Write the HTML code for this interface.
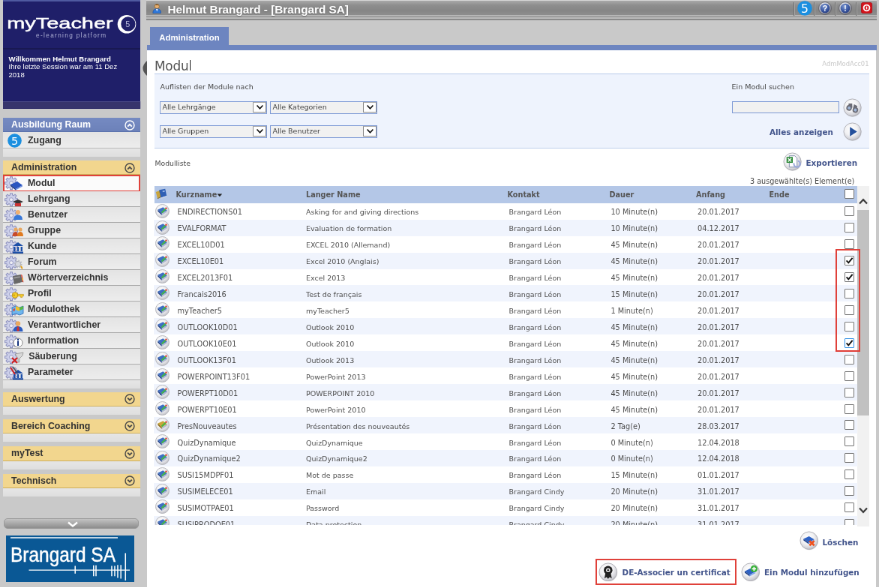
<!DOCTYPE html>
<html lang="de"><head><meta charset="utf-8"><title>myTeacher - Modul</title>
<style>
*{box-sizing:border-box;margin:0;padding:0}
html,body{width:879px;height:587px;overflow:hidden;background:#c9c9c9}
body{font-family:"DejaVu Sans","Liberation Sans",sans-serif}
#w{position:absolute;left:0;top:0;width:1172px;height:783px;transform:scale(.75);transform-origin:0 0;will-change:transform;overflow:hidden;color:#4a4a4a;font-size:9.5px}
.abs{position:absolute}
.ar{font-family:"Liberation Sans",sans-serif}
/* sidebar */
#sb{position:absolute;left:4px;top:0;width:183px;height:783px}
#navy{position:absolute;left:0;top:0;width:183px;height:145px;background:#1f1f69;border-top:2px solid #4f5aa0}
#navy .ln{position:absolute;left:0;top:62px;width:183px;height:2px;background:#191952}
#navy .strip{position:absolute;left:0;bottom:0;width:183px;height:10.5px;background:#37356c;border-top:1px solid #4c4c86}
.welc{position:absolute;left:7.5px;top:71.5px;color:#fff;font:9.55px/10.7px "Liberation Sans",sans-serif;width:160px}
.welc b{font-weight:bold}
.gh{position:absolute;left:0;width:183px;height:19.4px;font:bold 12.4px/18.6px "Liberation Sans",sans-serif;padding-left:11px}
.gh.blue{background:linear-gradient(#768bc2,#6d82ba);color:#fff;border-bottom:1.5px solid #5b72ad}
.gh.yel{background:#f2d68e;color:#333;border-bottom:1.5px solid #cfae5c}
.gh .chev{position:absolute;right:7px;top:2.5px}
.sp{position:absolute;left:0;width:183px;height:11.2px;background:linear-gradient(#e6e6e6,#dfdfdf)}
.it{position:absolute;left:0;width:183px;height:21px;background:linear-gradient(#e4e4e4,#ededed);border-bottom:1.5px solid #a9a9a9;font:bold 12.4px/21.5px "Liberation Sans",sans-serif;color:#333}
.it .mi{position:absolute;left:0.5px;top:0.5px}
.it span{position:absolute;left:33px;top:0}
.it.sel{background:#fbfbfb;border:2.4px solid #e0413a;height:23px;top:233px;line-height:18.5px}
.it.sel span{left:31px}
.it.sel .mi{left:-1.5px;top:-1.5px}
/* main */
#tb{position:absolute;left:195px;top:0;width:974.3px;height:27.2px;background:linear-gradient(to bottom,#d4d4d4 0,#d4d4d4 1.2px,#a8a8a8 1.3px,#8e8e8e 7px,#868686 14px,#8e8e8e 20px,#b6b6b6 20px,#b6b6b6 21.7px,#868686 21.7px,#868686 22.9px,#bcbcbc 22.9px,#bcbcbc 25.3px,#8a8a8a 25.3px,#8a8a8a 27.2px)}
#tb2{display:none}
#tb .t{position:absolute;left:28.5px;top:2.9px;font:bold 15.3px/20px "Liberation Sans",sans-serif;color:#fff;text-shadow:0 1px 1px #666;white-space:nowrap}
#tab{position:absolute;left:200px;top:36px;width:105px;height:26px;background:#6d85c0;color:#fff;font:bold 11.4px/29.8px "Liberation Sans",sans-serif;text-align:center}
#bl{position:absolute;left:196px;top:60.4px;width:973.3px;height:6.4px;background:#6d85c0}
#ct{position:absolute;left:196px;top:66.6px;width:972px;height:717px;background:#fff}
h1{position:absolute;left:206px;top:75.7px;font:normal 16.9px/24px "DejaVu Sans",sans-serif;color:#555;letter-spacing:-.2px}
#code{position:absolute;right:13.5px;top:79.5px;font-size:8.4px;color:#c9c9c9}
#flt{position:absolute;left:206px;top:97.8px;width:953px;height:100.7px;background:#eef3fd;border-top:1.5px solid #bccdec;border-bottom:1.5px solid #bccdec}
.lbl{position:absolute;white-space:nowrap;line-height:12px}
.sel2{position:absolute;width:143px;height:16.5px;border:1.5px solid #7f9bd6;background:#f1f1f1;font-size:9.5px;line-height:14.2px;padding-left:2.4px;color:#444}
.sel2 i{position:absolute;right:0;top:0;width:18.5px;height:13.5px;background:#fff;border:1px solid #8a8a8a;border-top-color:#aaa}
.sel2 i svg{position:absolute;left:3px;top:2.2px}
#inp{position:absolute;left:976px;top:134.8px;width:143px;height:16.7px;border:1.5px solid #7f9bd6;background:#f1f1f1}
.bb{font-weight:bold;color:#43558c}
/* table */
#th{position:absolute;left:206px;top:248px;width:937px;height:22.8px;background:#b4c7e7;font-weight:bold;color:#555;font-size:9.7px}
#th span{position:absolute;top:5.8px;line-height:12px;white-space:nowrap}
#tv{position:absolute;left:206px;top:270.8px;width:937px;height:429px;overflow:hidden}
.r{position:relative;height:21.95px;width:937px;font-size:9.75px}
.r.e{background:#f0f4fd}
.r span.c{position:absolute;top:6.6px;line-height:12px;white-space:nowrap;color:#505050}
.r>svg{position:absolute;left:1px;top:0.8px}
.cb{position:absolute;left:920px;top:4.5px;width:13px;height:13px;border:1px solid #767676;background:#fff;border-radius:1px}
.cb svg{position:absolute;left:0;top:0}
.cb.foc{border-color:#2f8fe6}
#sc{position:absolute;left:1143px;top:248px;width:16px;height:454px;background:#f1f1f1}
#sc .th{position:absolute;left:0;top:32px;width:16px;height:274px;background:#c1c1c1}
.red{position:absolute;border:2.6px solid #e0413a}
</style></head><body><div id="w">
<svg width="0" height="0" style="position:absolute"><defs><radialGradient id="rg" cx="42%" cy="36%" r="66%"><stop offset="0" stop-color="#ffffff"/><stop offset=".55" stop-color="#f1f1f3"/><stop offset=".85" stop-color="#d2d2d8"/><stop offset="1" stop-color="#b9b9c0"/></radialGradient><radialGradient id="rq" cx="40%" cy="30%" r="75%"><stop offset="0" stop-color="#f4f4f6"/><stop offset=".6" stop-color="#b8bac4"/><stop offset="1" stop-color="#6a6c78"/></radialGradient><radialGradient id="rb" cx="40%" cy="30%" r="80%"><stop offset="0" stop-color="#7f9ad2"/><stop offset=".55" stop-color="#3f5ca6"/><stop offset="1" stop-color="#22387a"/></radialGradient></defs></svg>

<div id="sb"><div id="navy">
<svg class="abs" style="left:0;top:14px" width="183" height="40" viewBox="0 0 183 40"><text x="5.2" y="21.6" font-family="'Liberation Sans',sans-serif" font-size="19.4" fill="#fff" stroke="#fff" stroke-width=".45" textLength="141.5" lengthAdjust="spacingAndGlyphs">myTeacher</text><circle cx="165" cy="16.2" r="12.3" fill="#fff"/><circle cx="166.9" cy="15.9" r="9.6" fill="#1f1f69"/><text x="166.2" y="20" font-family="'Liberation Sans',sans-serif" font-size="10.8" fill="#b9bbdc" text-anchor="middle">5</text><text x="44" y="34.3" font-family="'Liberation Sans',sans-serif" font-size="8.2" fill="#b0b2d6" textLength="93" lengthAdjust="spacing">e-learning platform</text></svg>
<div class="ln"></div>
<div class="welc"><b>Willkommen Helmut Brangard</b><br>Ihre letzte Session war am 11 Dez 2018</div>
<div class="strip"></div></div>
<div class="gh blue" style="top:157px">Ausbildung Raum<svg class="chev" width="14" height="14" viewBox="0 0 14 14"><circle cx="7" cy="7" r="6" fill="none" stroke="#fff" stroke-width="1.4"/><path d="M4.2 8.6 L7 5.8 L9.8 8.6" fill="none" stroke="#fff" stroke-width="1.9"/></svg></div>
<div class="it" style="top:176px;height:22px"><span class="abs" style="left:6px;top:2.2px;line-height:0"><svg width="19" height="19" viewBox="0 0 19 19"><circle cx="9.5" cy="9.5" r="9.3" fill="#1b8fe0"/><text x="9.5" y="14.6" font-family="'DejaVu Sans',sans-serif" font-size="14.5" font-weight="normal" fill="#fff" text-anchor="middle">5</text></svg></span><span style="top:1px">Zugang</span></div>
<div class="sp" style="top:198px"></div>
<div class="gh yel" style="top:214px">Administration<svg class="chev" width="14" height="14" viewBox="0 0 14 14"><circle cx="7" cy="7" r="6" fill="none" stroke="#4a4a4a" stroke-width="1.4"/><path d="M4.2 8.6 L7 5.8 L9.8 8.6" fill="none" stroke="#4a4a4a" stroke-width="1.9"/></svg></div>
<div class="it sel"><svg class="mi" width="27" height="21" viewBox="0 0 27 21"><path d="M18.47 8.72 L18.47 11.68 L16.10 11.77 L15.42 13.41 L17.04 15.15 L14.95 17.24 L13.21 15.62 L11.57 16.30 L11.48 18.67 L8.52 18.67 L8.43 16.30 L6.79 15.62 L5.05 17.24 L2.96 15.15 L4.58 13.41 L3.90 11.77 L1.53 11.68 L1.53 8.72 L3.90 8.63 L4.58 6.99 L2.96 5.25 L5.05 3.16 L6.79 4.78 L8.43 4.10 L8.52 1.73 L11.48 1.73 L11.57 4.10 L13.21 4.78 L14.95 3.16 L17.04 5.25 L15.42 6.99 L16.10 8.63Z" fill="#cdd0ea" stroke="#9296c2" stroke-width="1.1" stroke-linejoin="round"/><circle cx="10" cy="10.2" r="2.5" fill="#eeeef4" stroke="#9296c2" stroke-width=".9"/><path d="M9 12 L18 8 L25 13 L16 18 Z" fill="#2a55c0"/><path d="M9 12 L16 18 L16 19.5 L9 14Z" fill="#16357f"/><path d="M16 18 L25 13 L25 14.5 L16 19.5Z" fill="#6d8fe0"/></svg><span>Modul</span></div>
<div class="it" style="top:255px"><svg class="mi" width="27" height="21" viewBox="0 0 27 21"><path d="M18.47 8.72 L18.47 11.68 L16.10 11.77 L15.42 13.41 L17.04 15.15 L14.95 17.24 L13.21 15.62 L11.57 16.30 L11.48 18.67 L8.52 18.67 L8.43 16.30 L6.79 15.62 L5.05 17.24 L2.96 15.15 L4.58 13.41 L3.90 11.77 L1.53 11.68 L1.53 8.72 L3.90 8.63 L4.58 6.99 L2.96 5.25 L5.05 3.16 L6.79 4.78 L8.43 4.10 L8.52 1.73 L11.48 1.73 L11.57 4.10 L13.21 4.78 L14.95 3.16 L17.04 5.25 L15.42 6.99 L16.10 8.63Z" fill="#cdd0ea" stroke="#9296c2" stroke-width="1.1" stroke-linejoin="round"/><circle cx="10" cy="10.2" r="2.5" fill="#eeeef4" stroke="#9296c2" stroke-width=".9"/><path d="M12 13 L19 10 L26 13 L19 16Z" fill="#333"/><path d="M15 15 L23 15 L23 19 L15 19Z" fill="#c33"/></svg><span>Lehrgang</span></div>
<div class="it" style="top:276px"><svg class="mi" width="27" height="21" viewBox="0 0 27 21"><path d="M18.47 8.72 L18.47 11.68 L16.10 11.77 L15.42 13.41 L17.04 15.15 L14.95 17.24 L13.21 15.62 L11.57 16.30 L11.48 18.67 L8.52 18.67 L8.43 16.30 L6.79 15.62 L5.05 17.24 L2.96 15.15 L4.58 13.41 L3.90 11.77 L1.53 11.68 L1.53 8.72 L3.90 8.63 L4.58 6.99 L2.96 5.25 L5.05 3.16 L6.79 4.78 L8.43 4.10 L8.52 1.73 L11.48 1.73 L11.57 4.10 L13.21 4.78 L14.95 3.16 L17.04 5.25 L15.42 6.99 L16.10 8.63Z" fill="#cdd0ea" stroke="#9296c2" stroke-width="1.1" stroke-linejoin="round"/><circle cx="10" cy="10.2" r="2.5" fill="#eeeef4" stroke="#9296c2" stroke-width=".9"/><circle cx="19" cy="6" r="3" fill="#f0b070"/><path d="M13 16 Q13 9.5 19 9.5 Q25 9.5 25 16Z" fill="#3878d8"/></svg><span>Benutzer</span></div>
<div class="it" style="top:297px"><svg class="mi" width="27" height="21" viewBox="0 0 27 21"><path d="M18.47 8.72 L18.47 11.68 L16.10 11.77 L15.42 13.41 L17.04 15.15 L14.95 17.24 L13.21 15.62 L11.57 16.30 L11.48 18.67 L8.52 18.67 L8.43 16.30 L6.79 15.62 L5.05 17.24 L2.96 15.15 L4.58 13.41 L3.90 11.77 L1.53 11.68 L1.53 8.72 L3.90 8.63 L4.58 6.99 L2.96 5.25 L5.05 3.16 L6.79 4.78 L8.43 4.10 L8.52 1.73 L11.48 1.73 L11.57 4.10 L13.21 4.78 L14.95 3.16 L17.04 5.25 L15.42 6.99 L16.10 8.63Z" fill="#cdd0ea" stroke="#9296c2" stroke-width="1.1" stroke-linejoin="round"/><circle cx="10" cy="10.2" r="2.5" fill="#eeeef4" stroke="#9296c2" stroke-width=".9"/><circle cx="16" cy="8" r="2.6" fill="#e9a860"/><circle cx="22" cy="8" r="2.6" fill="#e9a860"/><path d="M11.5 17 Q11.5 11 16 11 Q19 11 19 17Z" fill="#c84a2a"/><path d="M18 17 Q18 11 22 11 Q26 11 26 17Z" fill="#e07a20"/></svg><span>Gruppe</span></div>
<div class="it" style="top:318px"><svg class="mi" width="27" height="21" viewBox="0 0 27 21"><path d="M18.47 8.72 L18.47 11.68 L16.10 11.77 L15.42 13.41 L17.04 15.15 L14.95 17.24 L13.21 15.62 L11.57 16.30 L11.48 18.67 L8.52 18.67 L8.43 16.30 L6.79 15.62 L5.05 17.24 L2.96 15.15 L4.58 13.41 L3.90 11.77 L1.53 11.68 L1.53 8.72 L3.90 8.63 L4.58 6.99 L2.96 5.25 L5.05 3.16 L6.79 4.78 L8.43 4.10 L8.52 1.73 L11.48 1.73 L11.57 4.10 L13.21 4.78 L14.95 3.16 L17.04 5.25 L15.42 6.99 L16.10 8.63Z" fill="#cdd0ea" stroke="#9296c2" stroke-width="1.1" stroke-linejoin="round"/><circle cx="10" cy="10.2" r="2.5" fill="#eeeef4" stroke="#9296c2" stroke-width=".9"/><path d="M12 9 L19 4 L26 9Z" fill="#1d4fa8"/><path d="M13 10h2.4v6H13zM17.8 10h2.4v6h-2.4zM22.6 10H25v6h-2.4z" fill="#1d4fa8"/><path d="M12 16.5h14V19H12z" fill="#1d4fa8"/></svg><span>Kunde</span></div>
<div class="it" style="top:339px"><svg class="mi" width="27" height="21" viewBox="0 0 27 21"><path d="M18.47 8.72 L18.47 11.68 L16.10 11.77 L15.42 13.41 L17.04 15.15 L14.95 17.24 L13.21 15.62 L11.57 16.30 L11.48 18.67 L8.52 18.67 L8.43 16.30 L6.79 15.62 L5.05 17.24 L2.96 15.15 L4.58 13.41 L3.90 11.77 L1.53 11.68 L1.53 8.72 L3.90 8.63 L4.58 6.99 L2.96 5.25 L5.05 3.16 L6.79 4.78 L8.43 4.10 L8.52 1.73 L11.48 1.73 L11.57 4.10 L13.21 4.78 L14.95 3.16 L17.04 5.25 L15.42 6.99 L16.10 8.63Z" fill="#cdd0ea" stroke="#9296c2" stroke-width="1.1" stroke-linejoin="round"/><circle cx="10" cy="10.2" r="2.5" fill="#eeeef4" stroke="#9296c2" stroke-width=".9"/><g fill="none" stroke="#b9bcc4" stroke-width="2.4" stroke-dasharray="1.8 1.6"><circle cx="19" cy="12" r="4.4"/></g><circle cx="19" cy="12" r="3.6" fill="#d6d8de" stroke="#a9acb6" stroke-width=".8"/><path d="M22 14 Q26 15 25 19 Q23 19 22 14" fill="#e0a020"/></svg><span>Forum</span></div>
<div class="it" style="top:360px"><svg class="mi" width="27" height="21" viewBox="0 0 27 21"><path d="M18.47 8.72 L18.47 11.68 L16.10 11.77 L15.42 13.41 L17.04 15.15 L14.95 17.24 L13.21 15.62 L11.57 16.30 L11.48 18.67 L8.52 18.67 L8.43 16.30 L6.79 15.62 L5.05 17.24 L2.96 15.15 L4.58 13.41 L3.90 11.77 L1.53 11.68 L1.53 8.72 L3.90 8.63 L4.58 6.99 L2.96 5.25 L5.05 3.16 L6.79 4.78 L8.43 4.10 L8.52 1.73 L11.48 1.73 L11.57 4.10 L13.21 4.78 L14.95 3.16 L17.04 5.25 L15.42 6.99 L16.10 8.63Z" fill="#cdd0ea" stroke="#9296c2" stroke-width="1.1" stroke-linejoin="round"/><circle cx="10" cy="10.2" r="2.5" fill="#eeeef4" stroke="#9296c2" stroke-width=".9"/><path d="M12 7 L23 5 L25 15 L14 18Z" fill="#686868"/><path d="M13.6 8.6 L21.6 7.2 L22 9 L14 10.4Z" fill="#9a9a9a"/><path d="M23 5 L24.6 5.8 L26.4 15.4 L25 15Z" fill="#e04030"/><path d="M24.2 9.4 L25.6 9.8 L26.2 12.6 L24.8 12.4Z" fill="#f0c030"/><path d="M14 18 L25 15 L26.4 15.4 L15 19Z" fill="#d8d8d8"/></svg><span>Wörterverzeichnis</span></div>
<div class="it" style="top:381px"><svg class="mi" width="27" height="21" viewBox="0 0 27 21"><path d="M18.47 8.72 L18.47 11.68 L16.10 11.77 L15.42 13.41 L17.04 15.15 L14.95 17.24 L13.21 15.62 L11.57 16.30 L11.48 18.67 L8.52 18.67 L8.43 16.30 L6.79 15.62 L5.05 17.24 L2.96 15.15 L4.58 13.41 L3.90 11.77 L1.53 11.68 L1.53 8.72 L3.90 8.63 L4.58 6.99 L2.96 5.25 L5.05 3.16 L6.79 4.78 L8.43 4.10 L8.52 1.73 L11.48 1.73 L11.57 4.10 L13.21 4.78 L14.95 3.16 L17.04 5.25 L15.42 6.99 L16.10 8.63Z" fill="#cdd0ea" stroke="#9296c2" stroke-width="1.1" stroke-linejoin="round"/><circle cx="10" cy="10.2" r="2.5" fill="#eeeef4" stroke="#9296c2" stroke-width=".9"/><circle cx="15" cy="11.6" r="3.8" fill="#f4cc28" stroke="#b98a10" stroke-width=".8"/><circle cx="13.8" cy="11.6" r="1" fill="#b98a10"/><path d="M18.4 10.4 H26.4 V12.8 H24.6 V14.6 H22.6 V12.8 H18.4Z" fill="#f4cc28" stroke="#b98a10" stroke-width=".6"/></svg><span>Profil</span></div>
<div class="it" style="top:402px"><svg class="mi" width="27" height="21" viewBox="0 0 27 21"><path d="M18.47 8.72 L18.47 11.68 L16.10 11.77 L15.42 13.41 L17.04 15.15 L14.95 17.24 L13.21 15.62 L11.57 16.30 L11.48 18.67 L8.52 18.67 L8.43 16.30 L6.79 15.62 L5.05 17.24 L2.96 15.15 L4.58 13.41 L3.90 11.77 L1.53 11.68 L1.53 8.72 L3.90 8.63 L4.58 6.99 L2.96 5.25 L5.05 3.16 L6.79 4.78 L8.43 4.10 L8.52 1.73 L11.48 1.73 L11.57 4.10 L13.21 4.78 L14.95 3.16 L17.04 5.25 L15.42 6.99 L16.10 8.63Z" fill="#cdd0ea" stroke="#9296c2" stroke-width="1.1" stroke-linejoin="round"/><circle cx="10" cy="10.2" r="2.5" fill="#eeeef4" stroke="#9296c2" stroke-width=".9"/><path d="M11 7 L16 5 L21 7 L26 5 L26 15 L21 17 L16 15 L11 17Z" fill="#6fb6ee" stroke="#2a6ab8" stroke-width=".8"/><path d="M16 5 L21 7 L21 12 L16 10Z" fill="#f0c030"/><path d="M21 7 L26 5 L26 9 L21 11Z" fill="#58b848"/><path d="M12.6 9 l2.2 -1 v3.2 l-2.2 1z" fill="#d84030"/></svg><span>Modulothek</span></div>
<div class="it" style="top:423px"><svg class="mi" width="27" height="21" viewBox="0 0 27 21"><path d="M18.47 8.72 L18.47 11.68 L16.10 11.77 L15.42 13.41 L17.04 15.15 L14.95 17.24 L13.21 15.62 L11.57 16.30 L11.48 18.67 L8.52 18.67 L8.43 16.30 L6.79 15.62 L5.05 17.24 L2.96 15.15 L4.58 13.41 L3.90 11.77 L1.53 11.68 L1.53 8.72 L3.90 8.63 L4.58 6.99 L2.96 5.25 L5.05 3.16 L6.79 4.78 L8.43 4.10 L8.52 1.73 L11.48 1.73 L11.57 4.10 L13.21 4.78 L14.95 3.16 L17.04 5.25 L15.42 6.99 L16.10 8.63Z" fill="#cdd0ea" stroke="#9296c2" stroke-width="1.1" stroke-linejoin="round"/><circle cx="10" cy="10.2" r="2.5" fill="#eeeef4" stroke="#9296c2" stroke-width=".9"/><circle cx="19" cy="7.5" r="3.2" fill="#e9a860"/><path d="M12.5 18 Q12.5 11 19 11 Q25.5 11 25.5 18Z" fill="#2a5bc0"/><path d="M18 11.5h2l.8 5-1.8 1.5-1.8-1.5z" fill="#c33"/></svg><span>Verantwortlicher</span></div>
<div class="it" style="top:444px"><svg class="mi" width="27" height="21" viewBox="0 0 27 21"><path d="M18.47 8.72 L18.47 11.68 L16.10 11.77 L15.42 13.41 L17.04 15.15 L14.95 17.24 L13.21 15.62 L11.57 16.30 L11.48 18.67 L8.52 18.67 L8.43 16.30 L6.79 15.62 L5.05 17.24 L2.96 15.15 L4.58 13.41 L3.90 11.77 L1.53 11.68 L1.53 8.72 L3.90 8.63 L4.58 6.99 L2.96 5.25 L5.05 3.16 L6.79 4.78 L8.43 4.10 L8.52 1.73 L11.48 1.73 L11.57 4.10 L13.21 4.78 L14.95 3.16 L17.04 5.25 L15.42 6.99 L16.10 8.63Z" fill="#cdd0ea" stroke="#9296c2" stroke-width="1.1" stroke-linejoin="round"/><circle cx="10" cy="10.2" r="2.5" fill="#eeeef4" stroke="#9296c2" stroke-width=".9"/><circle cx="19" cy="12" r="6" fill="#fff" stroke="#888" stroke-width="1"/><path d="M18 9.5h2v6.5h-2z" fill="#16357f"/><circle cx="19" cy="7.6" r="1.2" fill="#16357f"/></svg><span>Information</span></div>
<div class="it" style="top:465px"><svg class="mi" width="27" height="21" viewBox="0 0 27 21"><path d="M18.47 8.72 L18.47 11.68 L16.10 11.77 L15.42 13.41 L17.04 15.15 L14.95 17.24 L13.21 15.62 L11.57 16.30 L11.48 18.67 L8.52 18.67 L8.43 16.30 L6.79 15.62 L5.05 17.24 L2.96 15.15 L4.58 13.41 L3.90 11.77 L1.53 11.68 L1.53 8.72 L3.90 8.63 L4.58 6.99 L2.96 5.25 L5.05 3.16 L6.79 4.78 L8.43 4.10 L8.52 1.73 L11.48 1.73 L11.57 4.10 L13.21 4.78 L14.95 3.16 L17.04 5.25 L15.42 6.99 L16.10 8.63Z" fill="#cdd0ea" stroke="#9296c2" stroke-width="1.1" stroke-linejoin="round"/><circle cx="10" cy="10.2" r="2.5" fill="#eeeef4" stroke="#9296c2" stroke-width=".9"/><path d="M15 6 L26 4 L25 8 L21 12 L21 17 L19 17 L19 12Z" fill="#d8d8d8" stroke="#888" stroke-width=".7"/><path d="M11 11 L18 18 M18 11 L11 18" stroke="#d02020" stroke-width="2.2"/></svg><span style="left:34.2px">Säuberung</span></div>
<div class="it" style="top:486px"><svg class="mi" width="27" height="21" viewBox="0 0 27 21"><path d="M18.47 8.72 L18.47 11.68 L16.10 11.77 L15.42 13.41 L17.04 15.15 L14.95 17.24 L13.21 15.62 L11.57 16.30 L11.48 18.67 L8.52 18.67 L8.43 16.30 L6.79 15.62 L5.05 17.24 L2.96 15.15 L4.58 13.41 L3.90 11.77 L1.53 11.68 L1.53 8.72 L3.90 8.63 L4.58 6.99 L2.96 5.25 L5.05 3.16 L6.79 4.78 L8.43 4.10 L8.52 1.73 L11.48 1.73 L11.57 4.10 L13.21 4.78 L14.95 3.16 L17.04 5.25 L15.42 6.99 L16.10 8.63Z" fill="#cdd0ea" stroke="#9296c2" stroke-width="1.1" stroke-linejoin="round"/><circle cx="10" cy="10.2" r="2.5" fill="#eeeef4" stroke="#9296c2" stroke-width=".9"/><path d="M12 11 L19 6 L26 11Z" fill="#1d4fa8"/><path d="M13 12h2.4v5H13zM17.8 12h2.4v5h-2.4zM22.6 12H25v5h-2.4z" fill="#1d4fa8"/><path d="M12 17.2h14V19.4H12z" fill="#1d4fa8"/><path d="M9 3 L15 12" stroke="#d02020" stroke-width="2"/><path d="M12 2 L18 10" stroke="#555" stroke-width="1.6"/></svg><span>Parameter</span></div>
<div class="sp" style="top:507px"></div>
<div class="gh yel" style="top:522.6px;line-height:19.8px">Auswertung<svg class="chev" width="14" height="14" viewBox="0 0 14 14"><circle cx="7" cy="7" r="6" fill="none" stroke="#4a4a4a" stroke-width="1.4"/><path d="M4.2 5.6 L7 8.4 L9.8 5.6" fill="none" stroke="#4a4a4a" stroke-width="1.9"/></svg></div>
<div class="sp" style="top:542.0px"></div>
<div class="gh yel" style="top:558.9px;line-height:19.8px">Bereich Coaching<svg class="chev" width="14" height="14" viewBox="0 0 14 14"><circle cx="7" cy="7" r="6" fill="none" stroke="#4a4a4a" stroke-width="1.4"/><path d="M4.2 5.6 L7 8.4 L9.8 5.6" fill="none" stroke="#4a4a4a" stroke-width="1.9"/></svg></div>
<div class="sp" style="top:578.3px"></div>
<div class="gh yel" style="top:595.2px;line-height:19.8px">myTest<svg class="chev" width="14" height="14" viewBox="0 0 14 14"><circle cx="7" cy="7" r="6" fill="none" stroke="#4a4a4a" stroke-width="1.4"/><path d="M4.2 5.6 L7 8.4 L9.8 5.6" fill="none" stroke="#4a4a4a" stroke-width="1.9"/></svg></div>
<div class="sp" style="top:614.6px"></div>
<div class="gh yel" style="top:631.5px;line-height:19.8px">Technisch<svg class="chev" width="14" height="14" viewBox="0 0 14 14"><circle cx="7" cy="7" r="6" fill="none" stroke="#4a4a4a" stroke-width="1.4"/><path d="M4.2 5.6 L7 8.4 L9.8 5.6" fill="none" stroke="#4a4a4a" stroke-width="1.9"/></svg></div>
<div class="sp" style="top:650.9px"></div>
<div class="abs" style="left:0.6px;top:690.6px;width:180.6px;height:14.8px;border-radius:5px;background:linear-gradient(#c4c4c4,#8e8e8e);border:1px solid #9a9a9a"><svg class="abs" style="left:83px;top:3px" width="16" height="9" viewBox="0 0 16 9"><path d="M2 1.5 L8 6.5 L14 1.5" fill="none" stroke="#fff" stroke-width="2.4"/></svg></div>
<svg class="abs" style="left:4px;top:713.8px" width="171.2" height="62.2" viewBox="0 0 171.2 62.2"><rect width="171.2" height="62.2" fill="#0a5895"/><path d="M6 3 H149" stroke="#fff" stroke-width="1.4"/><text x="6" y="34.9" font-family="'Liberation Sans',sans-serif" font-size="28.2" fill="#fff" stroke="#fff" stroke-width=".5" textLength="140" lengthAdjust="spacingAndGlyphs">Brangard SA</text><path d="M30.5 46.2 H165" stroke="#fff" stroke-width="1.3"/><path d="M92.2 40.5V50.8 M116.8 39.7V54.2 M120 39.7V54.2 M141 40.5V54.2 M145 40.5V54.2 M149 39.3V56.4 M153.2 39.3V57.5 M159.3 23.4V60" stroke="#fff" stroke-width="1.5"/></svg>
</div>
<svg class="abs" style="left:190px;top:80.5px" width="6" height="20" viewBox="0 0 6 20"><path d="M6 0 Q-5 10 6 20Z" fill="#555"/></svg>
<div id="tb"><svg class="abs" style="left:7.5px;top:3.5px" width="12.5" height="14.5" viewBox="0 0 16 18"><circle cx="8" cy="5.4" r="3.9" fill="#e8b070" stroke="#8a5a20" stroke-width=".8"/><path d="M5 3.6 Q8 0 11.6 3.8 Q8.4 2.6 5 3.6Z" fill="#6a4010"/><path d="M1 17 Q1 9.6 8 9.6 Q15 9.6 15 17Z" fill="#2f78d8" stroke="#1b4a96" stroke-width=".8"/><path d="M6.4 10 L8 14 L9.6 10Z" fill="#fff"/></svg><div class="t">Helmut Brangard - [Brangard SA]</div>
<div class="abs" style="left:863.0px;top:3px;width:1.5px;height:18px;background:#a9a9a9;border-left:.8px solid #6e6e6e"></div><div class="abs" style="left:890.0px;top:3px;width:1.5px;height:18px;background:#a9a9a9;border-left:.8px solid #6e6e6e"></div><div class="abs" style="left:918.0px;top:3px;width:1.5px;height:18px;background:#a9a9a9;border-left:.8px solid #6e6e6e"></div><div class="abs" style="left:946.4px;top:3px;width:1.5px;height:18px;background:#a9a9a9;border-left:.8px solid #6e6e6e"></div>
<svg class="abs" style="left:868.2px;top:1.4px" width="20" height="20" viewBox="0 0 19 19"><circle cx="9.5" cy="9.5" r="9.3" fill="#1b8fe0"/><text x="9.5" y="14.8" font-family="'DejaVu Sans',sans-serif" font-size="14.8" fill="#fff" text-anchor="middle">5</text></svg>
<svg class="abs" style="left:895.5px;top:1.6px" width="18" height="18" viewBox="0 0 18 18"><circle cx="9" cy="9" r="8.4" fill="url(#rq)" stroke="#5c5c64" stroke-width=".9"/><circle cx="9" cy="9" r="6.3" fill="url(#rb)"/><text x="9" y="12.9" font-family="'Liberation Sans',sans-serif" font-weight="bold" font-size="10.6" fill="#fff" text-anchor="middle">?</text></svg>
<svg class="abs" style="left:923.0px;top:1.6px" width="18" height="18" viewBox="0 0 18 18"><circle cx="9" cy="9" r="8.4" fill="url(#rq)" stroke="#5c5c64" stroke-width=".9"/><circle cx="9" cy="9" r="6.3" fill="url(#rb)"/><text x="9" y="12.9" font-family="'Liberation Sans',sans-serif" font-weight="bold" font-size="10.6" fill="#fff" text-anchor="middle">!</text></svg>
<svg class="abs" style="left:952.8px;top:3px" width="15" height="15" viewBox="0 0 17 17"><rect x=".5" y=".5" width="16" height="16" rx="2.6" fill="#d4141c" stroke="#a81018" stroke-width="1"/><circle cx="8.5" cy="8.5" r="4.4" fill="none" stroke="#fff" stroke-width="2.1"/><path d="M8.5 6.4V10.6" stroke="#fff" stroke-width="1.7"/></svg>
</div><div id="tb2"></div>
<div id="tab">Administration</div><div id="bl"></div><div id="ct"></div>
<h1>Modul</h1><div id="code">AdmModAcc01</div>
<div id="flt"></div>
<div class="lbl" style="left:213.5px;top:109.5px">Auflisten der Module nach</div>
<div class="sel2" style="left:213px;top:135.3px">Alle Lehrgänge<i><svg width="11" height="8" viewBox="0 0 12 9"><path d="M1.6 1.6 L6 6.6 L10.4 1.6" fill="none" stroke="#111" stroke-width="1.8"/></svg></i></div>
<div class="sel2" style="left:360px;top:135.3px">Alle Kategorien<i><svg width="11" height="8" viewBox="0 0 12 9"><path d="M1.6 1.6 L6 6.6 L10.4 1.6" fill="none" stroke="#111" stroke-width="1.8"/></svg></i></div>
<div class="sel2" style="left:213px;top:167.3px">Alle Gruppen<i><svg width="11" height="8" viewBox="0 0 12 9"><path d="M1.6 1.6 L6 6.6 L10.4 1.6" fill="none" stroke="#111" stroke-width="1.8"/></svg></i></div>
<div class="sel2" style="left:360px;top:167.3px">Alle Benutzer<i><svg width="11" height="8" viewBox="0 0 12 9"><path d="M1.6 1.6 L6 6.6 L10.4 1.6" fill="none" stroke="#111" stroke-width="1.8"/></svg></i></div>
<div class="lbl" style="left:975.5px;top:109.5px">Ein Modul suchen</div><div id="inp"></div>
<div class="abs" style="left:1124px;top:130.5px;line-height:0"><svg width="25" height="25" viewBox="0 0 24 24"><circle cx="12.4" cy="12.6" r="11.2" fill="#9a9aa0" opacity=".35"/><circle cx="12" cy="12" r="11.1" fill="url(#rg)" stroke="#b0b0b6" stroke-width=".9"/><g transform="rotate(14 12 12)"><g fill="#6c6c76"><circle cx="8" cy="13.4" r="3.6"/><circle cx="16.4" cy="14" r="3.6"/><path d="M6 8 L10.5 7 L12 12 L7 13Z"/><path d="M13 7.4 L17.6 8.4 L18 13 L13 12.6Z"/></g><circle cx="8" cy="13.4" r="1.9" fill="#9fb6d8"/><circle cx="16.4" cy="14" r="1.9" fill="#9fb6d8"/></g></svg></div>
<div class="abs" style="left:1124px;top:163px;line-height:0"><svg width="25" height="25" viewBox="0 0 24 24"><circle cx="12.4" cy="12.6" r="11.2" fill="#9a9aa0" opacity=".35"/><circle cx="12" cy="12" r="11.1" fill="url(#rg)" stroke="#b0b0b6" stroke-width=".9"/><path d="M8.8 6 L18 12 L8.8 18Z" fill="#24509c"/></svg></div>
<div class="lbl bb" style="left:1026px;top:169px;font-size:10.4px;line-height:14px">Alles anzeigen</div>
<div class="lbl" style="left:206.5px;top:212px;font-size:9.3px">Modulliste</div>
<div class="abs" style="left:1044px;top:202.5px;line-height:0"><svg width="25" height="25" viewBox="0 0 24 24"><circle cx="12.4" cy="12.6" r="11.2" fill="#9a9aa0" opacity=".35"/><circle cx="12" cy="12" r="11.1" fill="url(#rg)" stroke="#b0b0b6" stroke-width=".9"/><path d="M8 4.5 H15 L18 7.5 V19 H8Z" fill="#fff" stroke="#7d8aa8" stroke-width=".9"/><path d="M4.5 6 H12.5 V13.5 H4.5Z" fill="#2e8b3a"/><path d="M6.4 7.6 L10.6 12 M10.6 7.6 L6.4 12" stroke="#fff" stroke-width="1.3"/><path d="M14 14 a4 4 0 1 0 5 -3" fill="none" stroke="#9aa8dc" stroke-width="2"/></svg></div>
<div class="lbl bb" style="left:1074.5px;top:210px;font-size:10.4px;line-height:14px">Exportieren</div>
<div class="lbl" style="left:1000px;top:236px;font-size:9.65px">3 ausgewählte(s) Element(e)</div>
<div id="th"><svg class="abs" style="left:1px;top:2.5px" width="17.5" height="15.5" viewBox="0 0 19 17"><path d="M0.8 5.6 L6.6 3.2 L8.4 11.6 L3 14.4Z" fill="#c9a43c"/><path d="M3 14.4 L8.4 11.6 L8.6 12.8 L3.4 15.6Z" fill="#8a6c1e"/><path d="M5.6 2.6 L14.4 0.8 L16.6 11 L8.2 13.6Z" fill="#2f5fb4"/><path d="M8.2 13.6 L16.6 11 L16.8 12.6 L8.6 15.4Z" fill="#c8d2e6"/><path d="M5.6 2.6 L8.2 13.6 L8.6 15.4 L5.8 4.4Z" fill="#1c3c7c"/><path d="M10.4 3.8 L13.6 3.2 L14 5 L10.8 5.8Z" fill="#9fbbe8"/></svg><span style="left:28.5px">Kurzname<svg width="8" height="6" viewBox="0 0 8 6" style="margin-left:0"><path d="M.6 1.4 H7.2 L3.9 5.2Z" fill="#222"/></svg></span><span style="left:202px">Langer Name</span><span style="left:470.5px">Kontakt</span><span style="left:606.5px">Dauer</span><span style="left:722px">Anfang</span><span style="left:819.5px">Ende</span><span class="cb" style="top:4px"></span></div>
<div id="tv">
<div class="r"><svg width="19" height="19" viewBox="0 0 19 19"><circle cx="9.5" cy="9.5" r="9" fill="url(#rg)" stroke="#b2b2b8" stroke-width=".9"/><path d="M3.4 7.6 L10.4 4.2 L15.8 8.4 L8.8 12.8Z" fill="#3f6fc4"/><path d="M3.4 7.6 L8.8 12.8 L8.8 15 L3.4 9.8Z" fill="#23438a"/><path d="M8.8 12.8 L15.8 8.4 L15.8 10.4 L8.8 15Z" fill="#aeb9d0"/><path d="M8.6 11.4 L13.8 6.4" stroke="#46b846" stroke-width="2.1"/><circle cx="14.5" cy="5.7" r="1.3" fill="#e0463c"/></svg><span class="c" style="left:30.5px;font-size:9.8px">ENDIRECTIONS01</span><span class="c" style="left:202px;font-size:9.5px">Asking for and giving directions</span><span class="c" style="left:472.5px;font-size:9.5px">Brangard Léon</span><span class="c" style="left:608.4px">10 Minute(n)</span><span class="c" style="left:724px">20.01.2017</span><span class="cb"></span></div>
<div class="r e"><svg width="19" height="19" viewBox="0 0 19 19"><circle cx="9.5" cy="9.5" r="9" fill="url(#rg)" stroke="#b2b2b8" stroke-width=".9"/><path d="M3.4 7.6 L10.4 4.2 L15.8 8.4 L8.8 12.8Z" fill="#3f6fc4"/><path d="M3.4 7.6 L8.8 12.8 L8.8 15 L3.4 9.8Z" fill="#23438a"/><path d="M8.8 12.8 L15.8 8.4 L15.8 10.4 L8.8 15Z" fill="#aeb9d0"/><path d="M8.6 11.4 L13.8 6.4" stroke="#46b846" stroke-width="2.1"/><circle cx="14.5" cy="5.7" r="1.3" fill="#e0463c"/></svg><span class="c" style="left:30.5px;font-size:9.8px">EVALFORMAT</span><span class="c" style="left:202px;font-size:9.5px">Evaluation de formation</span><span class="c" style="left:472.5px;font-size:9.5px">Brangard Léon</span><span class="c" style="left:608.4px">10 Minute(n)</span><span class="c" style="left:724px">04.12.2017</span><span class="cb"></span></div>
<div class="r"><svg width="19" height="19" viewBox="0 0 19 19"><circle cx="9.5" cy="9.5" r="9" fill="url(#rg)" stroke="#b2b2b8" stroke-width=".9"/><path d="M3.4 7.6 L10.4 4.2 L15.8 8.4 L8.8 12.8Z" fill="#3f6fc4"/><path d="M3.4 7.6 L8.8 12.8 L8.8 15 L3.4 9.8Z" fill="#23438a"/><path d="M8.8 12.8 L15.8 8.4 L15.8 10.4 L8.8 15Z" fill="#aeb9d0"/><path d="M8.6 11.4 L13.8 6.4" stroke="#46b846" stroke-width="2.1"/><circle cx="14.5" cy="5.7" r="1.3" fill="#e0463c"/></svg><span class="c" style="left:30.5px;font-size:9.8px">EXCEL10D01</span><span class="c" style="left:202px;font-size:9.5px">EXCEL 2010 (Allemand)</span><span class="c" style="left:472.5px;font-size:9.5px">Brangard Léon</span><span class="c" style="left:608.4px">45 Minute(n)</span><span class="c" style="left:724px">20.01.2017</span><span class="cb"></span></div>
<div class="r e"><svg width="19" height="19" viewBox="0 0 19 19"><circle cx="9.5" cy="9.5" r="9" fill="url(#rg)" stroke="#b2b2b8" stroke-width=".9"/><path d="M3.4 7.6 L10.4 4.2 L15.8 8.4 L8.8 12.8Z" fill="#3f6fc4"/><path d="M3.4 7.6 L8.8 12.8 L8.8 15 L3.4 9.8Z" fill="#23438a"/><path d="M8.8 12.8 L15.8 8.4 L15.8 10.4 L8.8 15Z" fill="#aeb9d0"/><path d="M8.6 11.4 L13.8 6.4" stroke="#46b846" stroke-width="2.1"/><circle cx="14.5" cy="5.7" r="1.3" fill="#e0463c"/></svg><span class="c" style="left:30.5px;font-size:9.8px">EXCEL10E01</span><span class="c" style="left:202px;font-size:9.5px">Excel 2010 (Anglais)</span><span class="c" style="left:472.5px;font-size:9.5px">Brangard Léon</span><span class="c" style="left:608.4px">45 Minute(n)</span><span class="c" style="left:724px">20.01.2017</span><span class="cb on"><svg width="11" height="11" viewBox="0 0 11 11"><path d="M1.6 5.4 L4.3 8.3 L9.6 1.8" fill="none" stroke="#111" stroke-width="1.9"/></svg></span></div>
<div class="r"><svg width="19" height="19" viewBox="0 0 19 19"><circle cx="9.5" cy="9.5" r="9" fill="url(#rg)" stroke="#b2b2b8" stroke-width=".9"/><path d="M3.4 7.6 L10.4 4.2 L15.8 8.4 L8.8 12.8Z" fill="#3f6fc4"/><path d="M3.4 7.6 L8.8 12.8 L8.8 15 L3.4 9.8Z" fill="#23438a"/><path d="M8.8 12.8 L15.8 8.4 L15.8 10.4 L8.8 15Z" fill="#aeb9d0"/><path d="M8.6 11.4 L13.8 6.4" stroke="#46b846" stroke-width="2.1"/><circle cx="14.5" cy="5.7" r="1.3" fill="#e0463c"/></svg><span class="c" style="left:30.5px;font-size:9.8px">EXCEL2013F01</span><span class="c" style="left:202px;font-size:9.5px">Excel 2013</span><span class="c" style="left:472.5px;font-size:9.5px">Brangard Léon</span><span class="c" style="left:608.4px">45 Minute(n)</span><span class="c" style="left:724px">20.01.2017</span><span class="cb on"><svg width="11" height="11" viewBox="0 0 11 11"><path d="M1.6 5.4 L4.3 8.3 L9.6 1.8" fill="none" stroke="#111" stroke-width="1.9"/></svg></span></div>
<div class="r e"><svg width="19" height="19" viewBox="0 0 19 19"><circle cx="9.5" cy="9.5" r="9" fill="url(#rg)" stroke="#b2b2b8" stroke-width=".9"/><path d="M3.4 7.6 L10.4 4.2 L15.8 8.4 L8.8 12.8Z" fill="#3f6fc4"/><path d="M3.4 7.6 L8.8 12.8 L8.8 15 L3.4 9.8Z" fill="#23438a"/><path d="M8.8 12.8 L15.8 8.4 L15.8 10.4 L8.8 15Z" fill="#aeb9d0"/><path d="M8.6 11.4 L13.8 6.4" stroke="#46b846" stroke-width="2.1"/><circle cx="14.5" cy="5.7" r="1.3" fill="#e0463c"/></svg><span class="c" style="left:30.5px;font-size:9.8px">Francais2016</span><span class="c" style="left:202px;font-size:9.5px">Test de français</span><span class="c" style="left:472.5px;font-size:9.5px">Brangard Léon</span><span class="c" style="left:608.4px">15 Minute(n)</span><span class="c" style="left:724px">20.01.2017</span><span class="cb"></span></div>
<div class="r"><svg width="19" height="19" viewBox="0 0 19 19"><circle cx="9.5" cy="9.5" r="9" fill="url(#rg)" stroke="#b2b2b8" stroke-width=".9"/><path d="M3.4 7.6 L10.4 4.2 L15.8 8.4 L8.8 12.8Z" fill="#3f6fc4"/><path d="M3.4 7.6 L8.8 12.8 L8.8 15 L3.4 9.8Z" fill="#23438a"/><path d="M8.8 12.8 L15.8 8.4 L15.8 10.4 L8.8 15Z" fill="#aeb9d0"/><path d="M8.6 11.4 L13.8 6.4" stroke="#46b846" stroke-width="2.1"/><circle cx="14.5" cy="5.7" r="1.3" fill="#e0463c"/></svg><span class="c" style="left:30.5px;font-size:9.8px">myTeacher5</span><span class="c" style="left:202px;font-size:9.5px">myTeacher5</span><span class="c" style="left:472.5px;font-size:9.5px">Brangard Léon</span><span class="c" style="left:608.4px">1 Minute(n)</span><span class="c" style="left:724px">20.01.2017</span><span class="cb"></span></div>
<div class="r e"><svg width="19" height="19" viewBox="0 0 19 19"><circle cx="9.5" cy="9.5" r="9" fill="url(#rg)" stroke="#b2b2b8" stroke-width=".9"/><path d="M3.4 7.6 L10.4 4.2 L15.8 8.4 L8.8 12.8Z" fill="#3f6fc4"/><path d="M3.4 7.6 L8.8 12.8 L8.8 15 L3.4 9.8Z" fill="#23438a"/><path d="M8.8 12.8 L15.8 8.4 L15.8 10.4 L8.8 15Z" fill="#aeb9d0"/><path d="M8.6 11.4 L13.8 6.4" stroke="#46b846" stroke-width="2.1"/><circle cx="14.5" cy="5.7" r="1.3" fill="#e0463c"/></svg><span class="c" style="left:30.5px;font-size:9.8px">OUTLOOK10D01</span><span class="c" style="left:202px;font-size:9.5px">Outlook 2010</span><span class="c" style="left:472.5px;font-size:9.5px">Brangard Léon</span><span class="c" style="left:608.4px">45 Minute(n)</span><span class="c" style="left:724px">20.01.2017</span><span class="cb"></span></div>
<div class="r"><svg width="19" height="19" viewBox="0 0 19 19"><circle cx="9.5" cy="9.5" r="9" fill="url(#rg)" stroke="#b2b2b8" stroke-width=".9"/><path d="M3.4 7.6 L10.4 4.2 L15.8 8.4 L8.8 12.8Z" fill="#3f6fc4"/><path d="M3.4 7.6 L8.8 12.8 L8.8 15 L3.4 9.8Z" fill="#23438a"/><path d="M8.8 12.8 L15.8 8.4 L15.8 10.4 L8.8 15Z" fill="#aeb9d0"/><path d="M8.6 11.4 L13.8 6.4" stroke="#46b846" stroke-width="2.1"/><circle cx="14.5" cy="5.7" r="1.3" fill="#e0463c"/></svg><span class="c" style="left:30.5px;font-size:9.8px">OUTLOOK10E01</span><span class="c" style="left:202px;font-size:9.5px">Outlook 2010</span><span class="c" style="left:472.5px;font-size:9.5px">Brangard Léon</span><span class="c" style="left:608.4px">45 Minute(n)</span><span class="c" style="left:724px">20.01.2017</span><span class="cb on foc"><svg width="11" height="11" viewBox="0 0 11 11"><path d="M1.6 5.4 L4.3 8.3 L9.6 1.8" fill="none" stroke="#111" stroke-width="1.9"/></svg></span></div>
<div class="r e"><svg width="19" height="19" viewBox="0 0 19 19"><circle cx="9.5" cy="9.5" r="9" fill="url(#rg)" stroke="#b2b2b8" stroke-width=".9"/><path d="M3.4 7.6 L10.4 4.2 L15.8 8.4 L8.8 12.8Z" fill="#3f6fc4"/><path d="M3.4 7.6 L8.8 12.8 L8.8 15 L3.4 9.8Z" fill="#23438a"/><path d="M8.8 12.8 L15.8 8.4 L15.8 10.4 L8.8 15Z" fill="#aeb9d0"/><path d="M8.6 11.4 L13.8 6.4" stroke="#46b846" stroke-width="2.1"/><circle cx="14.5" cy="5.7" r="1.3" fill="#e0463c"/></svg><span class="c" style="left:30.5px;font-size:9.8px">OUTLOOK13F01</span><span class="c" style="left:202px;font-size:9.5px">Outlook 2013</span><span class="c" style="left:472.5px;font-size:9.5px">Brangard Léon</span><span class="c" style="left:608.4px">45 Minute(n)</span><span class="c" style="left:724px">20.01.2017</span><span class="cb"></span></div>
<div class="r"><svg width="19" height="19" viewBox="0 0 19 19"><circle cx="9.5" cy="9.5" r="9" fill="url(#rg)" stroke="#b2b2b8" stroke-width=".9"/><path d="M3.4 7.6 L10.4 4.2 L15.8 8.4 L8.8 12.8Z" fill="#3f6fc4"/><path d="M3.4 7.6 L8.8 12.8 L8.8 15 L3.4 9.8Z" fill="#23438a"/><path d="M8.8 12.8 L15.8 8.4 L15.8 10.4 L8.8 15Z" fill="#aeb9d0"/><path d="M8.6 11.4 L13.8 6.4" stroke="#46b846" stroke-width="2.1"/><circle cx="14.5" cy="5.7" r="1.3" fill="#e0463c"/></svg><span class="c" style="left:30.5px;font-size:9.8px">POWERPOINT13F01</span><span class="c" style="left:202px;font-size:9.5px">PowerPoint 2013</span><span class="c" style="left:472.5px;font-size:9.5px">Brangard Léon</span><span class="c" style="left:608.4px">45 Minute(n)</span><span class="c" style="left:724px">20.01.2017</span><span class="cb"></span></div>
<div class="r e"><svg width="19" height="19" viewBox="0 0 19 19"><circle cx="9.5" cy="9.5" r="9" fill="url(#rg)" stroke="#b2b2b8" stroke-width=".9"/><path d="M3.4 7.6 L10.4 4.2 L15.8 8.4 L8.8 12.8Z" fill="#3f6fc4"/><path d="M3.4 7.6 L8.8 12.8 L8.8 15 L3.4 9.8Z" fill="#23438a"/><path d="M8.8 12.8 L15.8 8.4 L15.8 10.4 L8.8 15Z" fill="#aeb9d0"/><path d="M8.6 11.4 L13.8 6.4" stroke="#46b846" stroke-width="2.1"/><circle cx="14.5" cy="5.7" r="1.3" fill="#e0463c"/></svg><span class="c" style="left:30.5px;font-size:9.8px">POWERPT10D01</span><span class="c" style="left:202px;font-size:9.5px">POWERPOINT 2010</span><span class="c" style="left:472.5px;font-size:9.5px">Brangard Léon</span><span class="c" style="left:608.4px">45 Minute(n)</span><span class="c" style="left:724px">20.01.2017</span><span class="cb"></span></div>
<div class="r"><svg width="19" height="19" viewBox="0 0 19 19"><circle cx="9.5" cy="9.5" r="9" fill="url(#rg)" stroke="#b2b2b8" stroke-width=".9"/><path d="M3.4 7.6 L10.4 4.2 L15.8 8.4 L8.8 12.8Z" fill="#3f6fc4"/><path d="M3.4 7.6 L8.8 12.8 L8.8 15 L3.4 9.8Z" fill="#23438a"/><path d="M8.8 12.8 L15.8 8.4 L15.8 10.4 L8.8 15Z" fill="#aeb9d0"/><path d="M8.6 11.4 L13.8 6.4" stroke="#46b846" stroke-width="2.1"/><circle cx="14.5" cy="5.7" r="1.3" fill="#e0463c"/></svg><span class="c" style="left:30.5px;font-size:9.8px">POWERPT10E01</span><span class="c" style="left:202px;font-size:9.5px">PowerPoint 2010</span><span class="c" style="left:472.5px;font-size:9.5px">Brangard Léon</span><span class="c" style="left:608.4px">45 Minute(n)</span><span class="c" style="left:724px">20.01.2017</span><span class="cb"></span></div>
<div class="r e"><svg width="19" height="19" viewBox="0 0 19 19"><circle cx="9.5" cy="9.5" r="9" fill="url(#rg)" stroke="#b2b2b8" stroke-width=".9"/><path d="M3.4 7.6 L10.4 4.2 L15.8 8.4 L8.8 12.8Z" fill="#c9a63a"/><path d="M3.4 7.6 L8.8 12.8 L8.8 15 L3.4 9.8Z" fill="#8a6a18"/><path d="M8.8 12.8 L15.8 8.4 L15.8 10.4 L8.8 15Z" fill="#aeb9d0"/><path d="M8.6 11.4 L13.8 6.4" stroke="#46b846" stroke-width="2.1"/><circle cx="14.5" cy="5.7" r="1.3" fill="#e0463c"/></svg><span class="c" style="left:30.5px;font-size:9.8px">PresNouveautes</span><span class="c" style="left:202px;font-size:9.5px">Présentation des nouveautés</span><span class="c" style="left:472.5px;font-size:9.5px">Brangard Léon</span><span class="c" style="left:608.4px">2 Tag(e)</span><span class="c" style="left:724px">28.03.2017</span><span class="cb"></span></div>
<div class="r"><svg width="19" height="19" viewBox="0 0 19 19"><circle cx="9.5" cy="9.5" r="9" fill="url(#rg)" stroke="#b2b2b8" stroke-width=".9"/><path d="M3.4 7.6 L10.4 4.2 L15.8 8.4 L8.8 12.8Z" fill="#3f6fc4"/><path d="M3.4 7.6 L8.8 12.8 L8.8 15 L3.4 9.8Z" fill="#23438a"/><path d="M8.8 12.8 L15.8 8.4 L15.8 10.4 L8.8 15Z" fill="#aeb9d0"/><path d="M8.6 11.4 L13.8 6.4" stroke="#46b846" stroke-width="2.1"/><circle cx="14.5" cy="5.7" r="1.3" fill="#e0463c"/></svg><span class="c" style="left:30.5px;font-size:9.8px">QuizDynamique</span><span class="c" style="left:202px;font-size:9.5px">QuizDynamique</span><span class="c" style="left:472.5px;font-size:9.5px">Brangard Léon</span><span class="c" style="left:608.4px">0 Minute(n)</span><span class="c" style="left:724px">12.04.2018</span><span class="cb"></span></div>
<div class="r e"><svg width="19" height="19" viewBox="0 0 19 19"><circle cx="9.5" cy="9.5" r="9" fill="url(#rg)" stroke="#b2b2b8" stroke-width=".9"/><path d="M3.4 7.6 L10.4 4.2 L15.8 8.4 L8.8 12.8Z" fill="#3f6fc4"/><path d="M3.4 7.6 L8.8 12.8 L8.8 15 L3.4 9.8Z" fill="#23438a"/><path d="M8.8 12.8 L15.8 8.4 L15.8 10.4 L8.8 15Z" fill="#aeb9d0"/><path d="M8.6 11.4 L13.8 6.4" stroke="#46b846" stroke-width="2.1"/><circle cx="14.5" cy="5.7" r="1.3" fill="#e0463c"/></svg><span class="c" style="left:30.5px;font-size:9.8px">QuizDynamique2</span><span class="c" style="left:202px;font-size:9.5px">QuizDynamique2</span><span class="c" style="left:472.5px;font-size:9.5px">Brangard Léon</span><span class="c" style="left:608.4px">0 Minute(n)</span><span class="c" style="left:724px">12.04.2018</span><span class="cb"></span></div>
<div class="r"><svg width="19" height="19" viewBox="0 0 19 19"><circle cx="9.5" cy="9.5" r="9" fill="url(#rg)" stroke="#b2b2b8" stroke-width=".9"/><path d="M3.4 7.6 L10.4 4.2 L15.8 8.4 L8.8 12.8Z" fill="#3f6fc4"/><path d="M3.4 7.6 L8.8 12.8 L8.8 15 L3.4 9.8Z" fill="#23438a"/><path d="M8.8 12.8 L15.8 8.4 L15.8 10.4 L8.8 15Z" fill="#aeb9d0"/><path d="M8.6 11.4 L13.8 6.4" stroke="#46b846" stroke-width="2.1"/><circle cx="14.5" cy="5.7" r="1.3" fill="#e0463c"/></svg><span class="c" style="left:30.5px;font-size:9.8px">SUSI15MDPF01</span><span class="c" style="left:202px;font-size:9.5px">Mot de passe</span><span class="c" style="left:472.5px;font-size:9.5px">Brangard Léon</span><span class="c" style="left:608.4px">15 Minute(n)</span><span class="c" style="left:724px">01.01.2017</span><span class="cb"></span></div>
<div class="r e"><svg width="19" height="19" viewBox="0 0 19 19"><circle cx="9.5" cy="9.5" r="9" fill="url(#rg)" stroke="#b2b2b8" stroke-width=".9"/><path d="M3.4 7.6 L10.4 4.2 L15.8 8.4 L8.8 12.8Z" fill="#3f6fc4"/><path d="M3.4 7.6 L8.8 12.8 L8.8 15 L3.4 9.8Z" fill="#23438a"/><path d="M8.8 12.8 L15.8 8.4 L15.8 10.4 L8.8 15Z" fill="#aeb9d0"/><path d="M8.6 11.4 L13.8 6.4" stroke="#46b846" stroke-width="2.1"/><circle cx="14.5" cy="5.7" r="1.3" fill="#e0463c"/></svg><span class="c" style="left:30.5px;font-size:9.8px">SUSIMELECE01</span><span class="c" style="left:202px;font-size:9.5px">Email</span><span class="c" style="left:472.5px;font-size:9.5px">Brangard Cindy</span><span class="c" style="left:608.4px">20 Minute(n)</span><span class="c" style="left:724px">31.01.2017</span><span class="cb"></span></div>
<div class="r"><svg width="19" height="19" viewBox="0 0 19 19"><circle cx="9.5" cy="9.5" r="9" fill="url(#rg)" stroke="#b2b2b8" stroke-width=".9"/><path d="M3.4 7.6 L10.4 4.2 L15.8 8.4 L8.8 12.8Z" fill="#3f6fc4"/><path d="M3.4 7.6 L8.8 12.8 L8.8 15 L3.4 9.8Z" fill="#23438a"/><path d="M8.8 12.8 L15.8 8.4 L15.8 10.4 L8.8 15Z" fill="#aeb9d0"/><path d="M8.6 11.4 L13.8 6.4" stroke="#46b846" stroke-width="2.1"/><circle cx="14.5" cy="5.7" r="1.3" fill="#e0463c"/></svg><span class="c" style="left:30.5px;font-size:9.8px">SUSIMOTPAE01</span><span class="c" style="left:202px;font-size:9.5px">Password</span><span class="c" style="left:472.5px;font-size:9.5px">Brangard Cindy</span><span class="c" style="left:608.4px">20 Minute(n)</span><span class="c" style="left:724px">31.01.2017</span><span class="cb"></span></div>
<div class="r e"><svg width="19" height="19" viewBox="0 0 19 19"><circle cx="9.5" cy="9.5" r="9" fill="url(#rg)" stroke="#b2b2b8" stroke-width=".9"/><path d="M3.4 7.6 L10.4 4.2 L15.8 8.4 L8.8 12.8Z" fill="#3f6fc4"/><path d="M3.4 7.6 L8.8 12.8 L8.8 15 L3.4 9.8Z" fill="#23438a"/><path d="M8.8 12.8 L15.8 8.4 L15.8 10.4 L8.8 15Z" fill="#aeb9d0"/><path d="M8.6 11.4 L13.8 6.4" stroke="#46b846" stroke-width="2.1"/><circle cx="14.5" cy="5.7" r="1.3" fill="#e0463c"/></svg><span class="c" style="left:30.5px;font-size:9.8px">SUSIPRODOE01</span><span class="c" style="left:202px;font-size:9.5px">Data protection</span><span class="c" style="left:472.5px;font-size:9.5px">Brangard Cindy</span><span class="c" style="left:608.4px">20 Minute(n)</span><span class="c" style="left:724px">31.01.2017</span><span class="cb"></span></div>
</div>
<div id="sc"><svg class="abs" style="left:2.2px;top:15.6px" width="12" height="9" viewBox="0 0 12 9"><path d="M1 7.4 L6 2.2 L11 7.4" fill="none" stroke="#3c3c3c" stroke-width="2.2"/></svg><div class="th"></div><svg class="abs" style="left:2.2px;top:427.5px" width="12" height="9" viewBox="0 0 12 9"><path d="M1 1.6 L6 6.8 L11 1.6" fill="none" stroke="#3c3c3c" stroke-width="2.2"/></svg></div>
<div class="red" style="left:1114px;top:332px;width:33px;height:136.6px"></div>
<div class="abs" style="left:1065.8px;top:708.2px;line-height:0"><svg width="25.4" height="25.4" viewBox="0 0 24 24"><circle cx="12.4" cy="12.6" r="11.2" fill="#9a9aa0" opacity=".35"/><circle cx="12" cy="12" r="11.1" fill="url(#rg)" stroke="#b0b0b6" stroke-width=".9"/><path d="M5 10 L12 6.6 L18.6 10.6 L11.4 14.6Z" fill="#2f62c4"/><path d="M5 10 L11.4 14.6 L11.4 16.4 L5 11.8Z" fill="#1b3d86"/><path d="M11.4 14.6 L18.6 10.6 L18.6 12.4 L11.4 16.4Z" fill="#7fa6ea"/><path d="M12.6 12.4 L18.6 18.2 M18.6 12.4 L12.6 18.2" stroke="#f0521c" stroke-width="2.6"/></svg></div>
<div class="lbl bb" style="left:1096.5px;top:716.2px;font-size:10.4px;line-height:14px">Löschen</div>
<div class="red" style="left:794px;top:745px;width:187.5px;height:34.5px"></div>
<div class="abs" style="left:798.2px;top:749.8px;line-height:0"><svg width="25.6" height="25.6" viewBox="0 0 24 24"><circle cx="12.4" cy="12.6" r="11.2" fill="#9a9aa0" opacity=".35"/><circle cx="12" cy="12" r="11.1" fill="url(#rg)" stroke="#b0b0b6" stroke-width=".9"/><circle cx="12" cy="9.6" r="5.4" fill="#222"/><circle cx="12" cy="9.6" r="2.6" fill="#ececee"/><circle cx="12" cy="9.6" r="1.2" fill="#222"/><path d="M8.6 13.4 L7.4 20 L10 18.4 L12 20.4 L14 18.4 L16.6 20 L15.4 13.4Z" fill="#222"/></svg></div>
<div class="lbl bb" style="left:829.5px;top:756px;font-size:10.4px;line-height:14px">DE-Associer un certificat</div>
<div class="abs" style="left:988.4px;top:749.8px;line-height:0"><svg width="25.4" height="25.4" viewBox="0 0 24 24"><circle cx="12.4" cy="12.6" r="11.2" fill="#9a9aa0" opacity=".35"/><circle cx="12" cy="12" r="11.1" fill="url(#rg)" stroke="#b0b0b6" stroke-width=".9"/><path d="M4.6 11 L11.6 7.6 L18.2 11.6 L11 15.6Z" fill="#2f62c4"/><path d="M4.6 11 L11 15.6 L11 17.4 L4.6 12.8Z" fill="#1b3d86"/><path d="M11 15.6 L18.2 11.6 L18.2 13.4 L11 17.4Z" fill="#7fa6ea"/><circle cx="16.4" cy="8" r="4.4" fill="#35b035"/><path d="M16.4 5.4 V10.6 M13.8 8 H19" stroke="#fff" stroke-width="1.6"/></svg></div>
<div class="lbl bb" style="left:1019px;top:756px;font-size:10.4px;line-height:14px">Ein Modul hinzufügen</div>
</div></body></html>
